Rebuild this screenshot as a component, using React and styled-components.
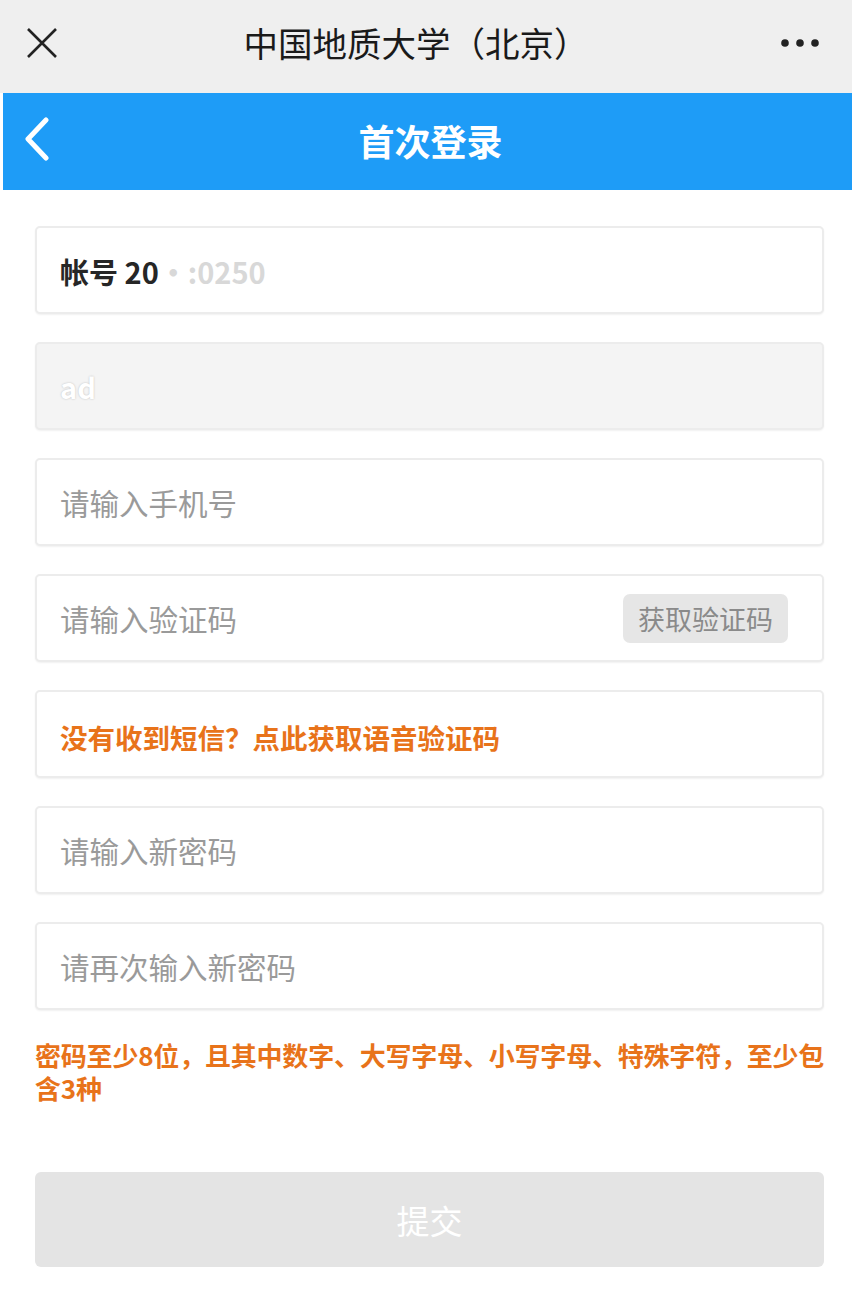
import React from "react";
import styled, { createGlobalStyle } from "styled-components";

const GlobalStyle = createGlobalStyle`
  html, body {
    margin: 0;
    padding: 0;
    background: #ffffff;
    font-family: "Noto Sans CJK SC", "Noto Sans", sans-serif;
  }
`;

export default function App() {
  return (
    <>
      <GlobalStyle />
      <Page>
        <TopBar>
          <IconSlot>
            <svg width="32" height="32" viewBox="0 0 32 32">
              <path d="M2 2 L30 30 M30 2 L2 30" stroke="#222" strokeWidth="2.6" fill="none" />
            </svg>
          </IconSlot>
          <TopTitle>中国地质大学（北京）</TopTitle>
          <IconSlot $right>
            <svg width="40" height="10" viewBox="0 0 40 10">
              <circle cx="5" cy="5" r="3.8" fill="#222" />
              <circle cx="20" cy="5" r="3.8" fill="#222" />
              <circle cx="35" cy="5" r="3.8" fill="#222" />
            </svg>
          </IconSlot>
        </TopBar>
        <NavBar>
          <BackSlot>
            <svg width="28" height="44" viewBox="0 0 28 44">
              <path d="M24 3 L6 22 L24 41" stroke="#fff" strokeWidth="5" fill="none" strokeLinecap="round" strokeLinejoin="round" />
            </svg>
          </BackSlot>
          <NavTitle>首次登录</NavTitle>
        </NavBar>

        <Form>
          <Field>
            <Value>
              帐号 20<Masked>·:0250</Masked>
            </Value>
          </Field>
          <Field $disabled>
            <Masked $white>ad</Masked>
          </Field>
          <Field>
            <Placeholder>请输入手机号</Placeholder>
          </Field>
          <Field>
            <Placeholder>请输入验证码</Placeholder>
            <CodeButton>获取验证码</CodeButton>
          </Field>
          <Field>
            <Notice>没有收到短信？点此获取语音验证码</Notice>
          </Field>
          <Field>
            <Placeholder>请输入新密码</Placeholder>
          </Field>
          <Field>
            <Placeholder>请再次输入新密码</Placeholder>
          </Field>
          <Hint>密码至少8位，且其中数字、大写字母、小写字母、特殊字符，至少包含3种</Hint>
          <Submit>提交</Submit>
        </Form>
      </Page>
    </>
  );
}

const Page = styled.div`
  width: 852px;
  min-height: 1291px;
  background: #ffffff;
`;

const TopBar = styled.div`
  height: 93px;
  background: #efefef;
  display: flex;
  align-items: center;
  justify-content: space-between;
  padding: 0 32px 0 26px;
  box-sizing: border-box;
`;

const IconSlot = styled.div`
  width: 44px;
  display: flex;
  justify-content: ${(p) => (p.$right ? "flex-end" : "flex-start")};
  align-items: center;
  margin-top: -8px;
`;

const TopTitle = styled.div`
  font-size: 34.5px;
  color: #1a1a1a;
  margin-left: -14px;
  margin-top: -9px;
`;

const NavBar = styled.div`
  height: 97px;
  margin-left: 3px;
  background: #1e9cf7;
  display: flex;
  align-items: center;
  justify-content: center;
  position: relative;
`;

const BackSlot = styled.div`
  position: absolute;
  left: 19px;
  top: 24px;
  display: flex;
`;

const NavTitle = styled.div`
  font-size: 36px;
  font-weight: 700;
  color: #ffffff;
  margin-left: 6px;
  margin-top: -4px;
`;

const Form = styled.div`
  display: flex;
  flex-direction: column;
  padding: 36px 28px 0 35px;
  gap: 28px;
`;

const Field = styled.div`
  height: 88px;
  box-sizing: border-box;
  border: 2px solid #ececec;
  border-radius: 5px;
  background: ${(p) => (p.$disabled ? "#f4f4f4" : "#ffffff")};
  box-shadow: 0 1px 2px rgba(0, 0, 0, 0.06);
  display: flex;
  align-items: center;
  justify-content: space-between;
  padding: 0 35px 0 23px;
`;

const Value = styled.div`
  font-size: 29px;
  font-weight: 700;
  color: #262626;
  font-family: "Noto Sans CJK SC", "Liberation Sans", sans-serif;
  margin-top: 2px;
`;

const Masked = styled.span`
  color: ${(p) => (p.$white ? "#ffffff" : "#d8d8d8")};
  font-weight: 700;
  font-size: 29px;
  ${(p) => p.$white && "text-shadow: 0 0 2px #bbb;"}
`;

const Placeholder = styled.div`
  font-size: 29.5px;
  color: #9a9a9a;
  margin-top: 0;
`;

const CodeButton = styled.div`
  height: 49px;
  padding: 0 15px;
  background: #e6e6e6;
  border-radius: 7px;
  display: flex;
  align-items: center;
  font-size: 27px;
  color: #8a8a8a;
  margin-right: -1px;
`;

const Notice = styled.div`
  font-size: 27.5px;
  font-weight: 700;
  color: #e8731a;
  margin-top: 6px;
`;

const Hint = styled.div`
  font-size: 26px;
  font-weight: 700;
  color: #e8731a;
  line-height: 33px;
  margin-right: -6px;
  letter-spacing: -0.2px;
`;

const Submit = styled.div`
  height: 95px;
  margin-top: 40px;
  border-radius: 6px;
  background: #e4e4e4;
  display: flex;
  align-items: center;
  justify-content: center;
  font-size: 33px;
  color: #ffffff;
`;
